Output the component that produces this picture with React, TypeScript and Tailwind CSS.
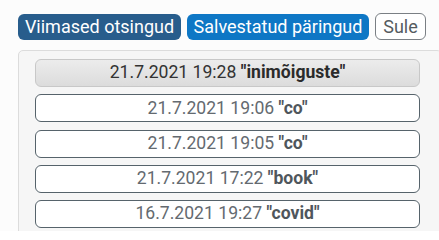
import React from "react";

const items = [
  { d: "21.7.2021 19:28", q: "inimõiguste", active: true },
  { d: "21.7.2021 19:06", q: "co" },
  { d: "21.7.2021 19:05", q: "co" },
  { d: "21.7.2021 17:22", q: "book" },
  { d: "16.7.2021 19:27", q: "covid" },
];

export default function App() {
  return (
    <div
      className="w-[439px] h-[231px] overflow-hidden bg-[#fcfcfc] pt-[13px] pl-[18px]"
      style={{ fontFamily: "Roboto, 'Liberation Sans', sans-serif" }}
    >
      <div className="flex items-end gap-[6px]">
        <button className="h-[26px] w-[163px] rounded-[6px] bg-[#285d8c] text-white text-[18px] leading-none flex items-center justify-center">
          Viimased otsingud
        </button>
        <button className="h-[26px] w-[182px] rounded-[6px] bg-[#0e77c5] text-white text-[18px] leading-none flex items-center justify-center">
          Salvestatud päringud
        </button>
        <button className="h-[27px] w-[51px] rounded-[6px] border border-[#7a7f84] bg-white text-[#555b60] text-[18px] leading-none flex items-center justify-center">
          Sule
        </button>
      </div>
      <div className="mt-[10px] w-[424px] h-[200px] rounded-[5px] border border-[#dcdcdc] bg-[#f6f6f6] pt-[8px] pl-[16px] flex flex-col gap-[7.3px]">
        {items.map((it, i) => (
          <div
            key={i}
            className={
              it.active
                ? "w-[385px] h-[28px] shrink-0 rounded-[6px] border border-[#c8c8c8] bg-gradient-to-b from-[#ececec] to-[#dcdcdc] text-[#333] text-[17.6px] leading-none flex items-center justify-center"
                : "w-[385px] h-[28px] shrink-0 rounded-[6px] border border-[#56636b] bg-white text-[#646a70] text-[17.6px] leading-none flex items-center justify-center"
            }
          >
            <span>{it.d}&nbsp;</span>
            <span className={it.active ? "font-bold text-[#2b2b2b]" : "font-bold text-[#4f565c]"}>
              "{it.q}"
            </span>
          </div>
        ))}
      </div>
    </div>
  );
}
